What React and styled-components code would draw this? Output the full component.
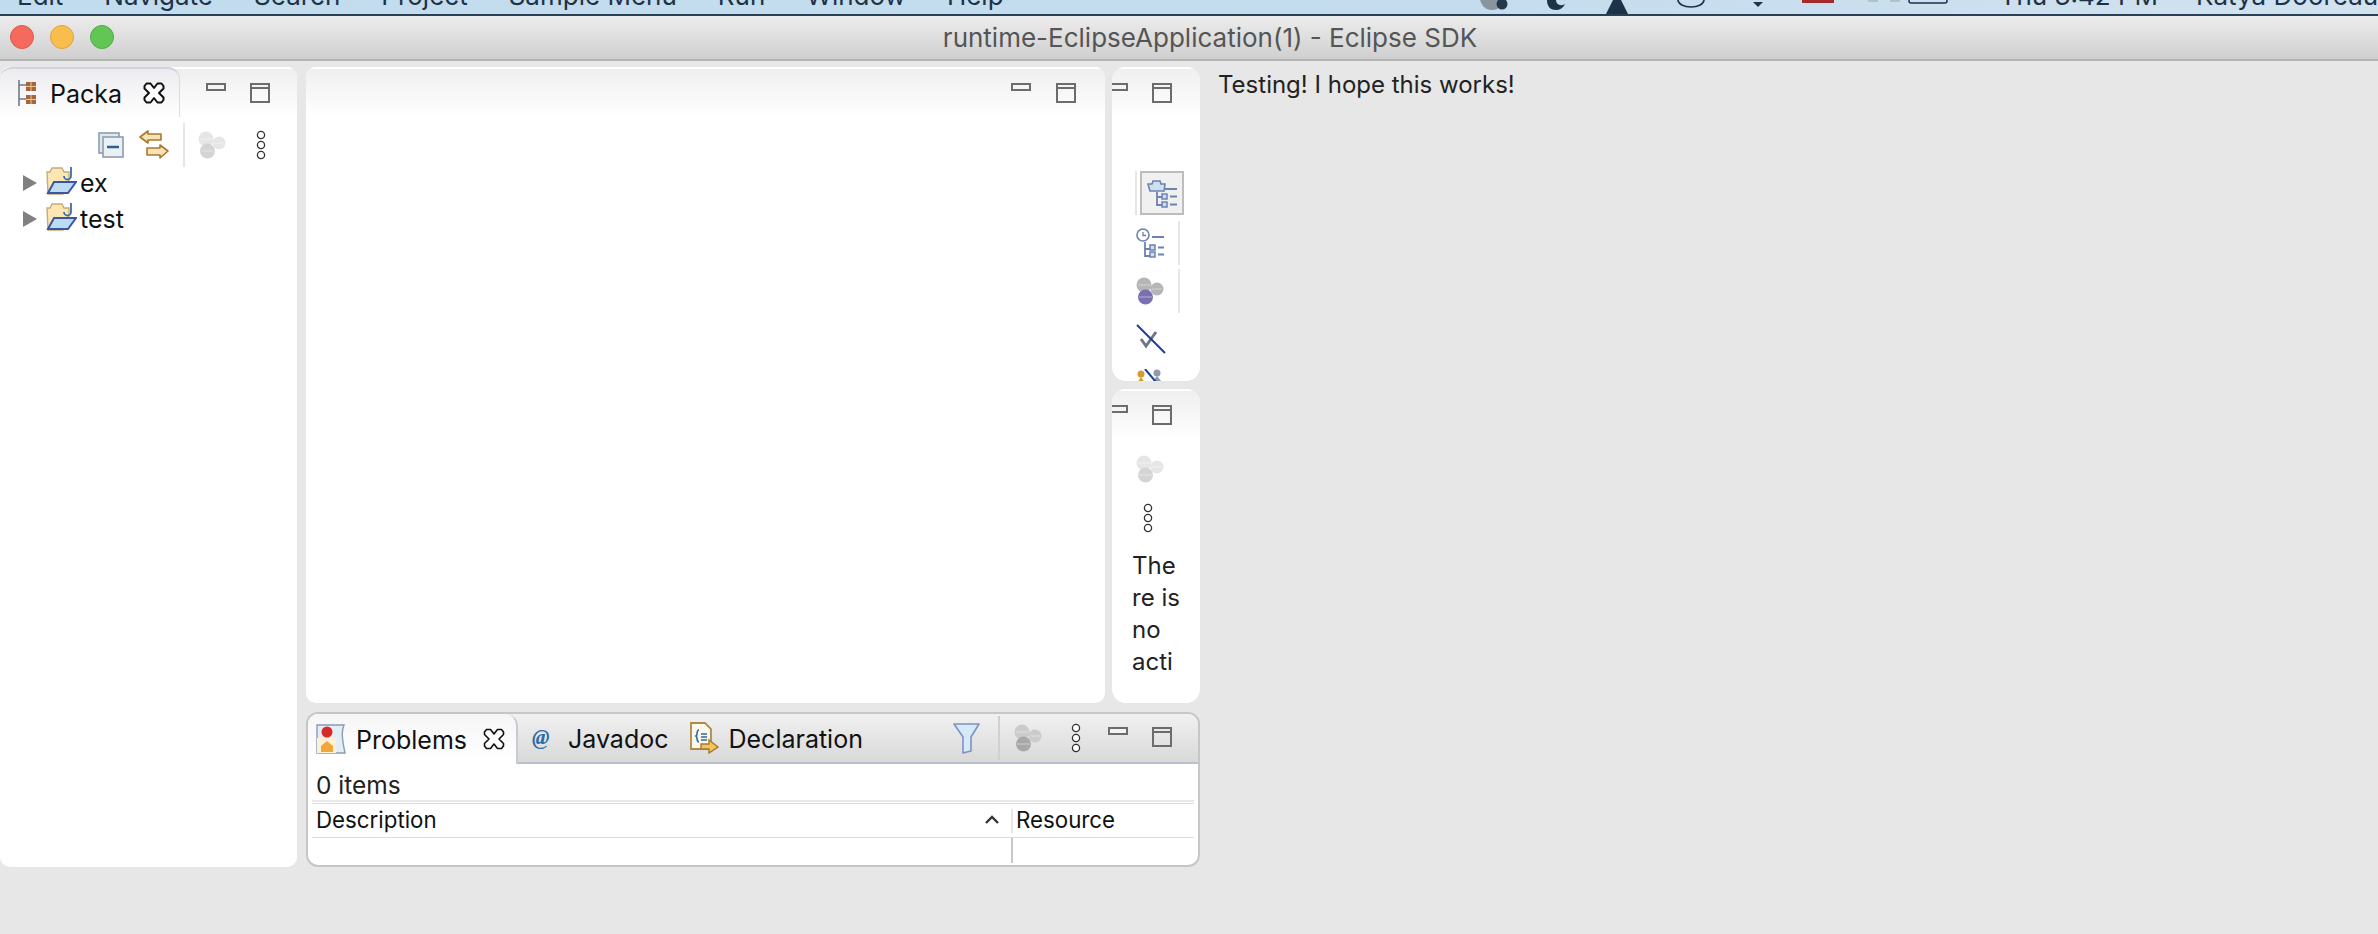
import React from 'react';
import styled, { createGlobalStyle } from 'styled-components';

const GlobalStyle = createGlobalStyle`
  html, body {
    margin: 0;
    padding: 0;
    height: 100%;
    background: #e7e7e7;
    overflow: hidden;
  }
  body {
    font-family: Inter, "Noto Sans", sans-serif;
    color: #111;
  }
`;

const Page = styled.div`
  width: 2378px;
  height: 934px;
  display: flex;
  flex-direction: column;
  overflow: hidden;
`;

const MenuBar = styled.div`
  height: 14px;
  flex: none;
  overflow: hidden;
  background: linear-gradient(90deg, #c2dcef 0%, #c4dcee 60%, #d2e2ef 100%);
  border-bottom: 2px solid #2a4056;
`;

const MenuRow = styled.div`
  display: flex;
  align-items: flex-start;
  height: 26px;
  margin-top: -17px;
  padding-left: 17px;
  font-size: 26px;
  line-height: 26px;
  color: #1d3246;
  white-space: nowrap;
`;

const MenuItem = styled.span`
  margin-right: 41px;
`;

const StatusIcons = styled.div`
  display: flex;
  align-items: flex-start;
  height: 14px;
  margin-top: 17px;
  margin-left: 433px;
`;

const StatusIcon = styled.svg`
  flex: none;
  margin-left: ${({ $gap }) => $gap || 0}px;
`;

const Clock = styled.span`
  margin-left: 52px;
  margin-top: -17px;
`;

const UserName = styled.span`
  margin-left: 38px;
  margin-top: -17px;
`;

const TitleBar = styled.div`
  height: 43px;
  flex: none;
  display: flex;
  align-items: center;
  background: linear-gradient(180deg, #ededed 0%, #cfcfcf 100%);
  border-bottom: 2px solid #b4b4b4;
`;

const Lights = styled.div`
  display: flex;
  gap: 16px;
  margin-left: 10px;
  margin-top: -2px;
`;

const Light = styled.span`
  width: 24px;
  height: 24px;
  border-radius: 50%;
  box-sizing: border-box;
  background: ${({ $color }) => $color};
  border: 1px solid ${({ $edge }) => $edge};
`;

const Title = styled.div`
  flex: 1;
  text-align: center;
  font-size: 26px;
  color: #555;
  margin-left: -72px;
`;

const Workspace = styled.div`
  flex: 1;
  display: flex;
  align-items: flex-start;
  padding-top: 6px;
`;

const SidePanel = styled.section`
  width: 297px;
  height: 800px;
  flex: none;
  background: #fff;
  border-radius: 10px;
  overflow: hidden;
`;

const Middle = styled.div`
  width: 894px;
  margin-left: 9px;
  flex: none;
  display: flex;
  flex-direction: column;
  gap: 9px;
`;

const TopRow = styled.div`
  display: flex;
  gap: 7px;
  height: 636px;
`;

const EditorPanel = styled.section`
  flex: 1;
  background: #fff;
  border-radius: 10px;
  overflow: hidden;
`;

const RightStack = styled.div`
  width: 88px;
  display: flex;
  flex-direction: column;
  gap: 8px;
`;

const NarrowPanel = styled.section`
  flex: 1;
  height: 314px;
  background: #fff;
  border-radius: 14px;
  overflow: hidden;
`;

const PanelHead = styled.div`
  height: 50px;
  box-sizing: border-box;
  display: flex;
  align-items: flex-start;
  justify-content: ${({ $end }) => ($end ? 'flex-end' : 'flex-start')};
  padding-right: ${({ $end }) => ($end ? '29px' : 0)};
  background: linear-gradient(180deg, #efefef 0%, #ffffff 100%);
  border-top: 2px solid #fff;
`;

const PackageTab = styled.div`
  width: 180px;
  height: 50px;
  margin-top: -2px;
  box-sizing: border-box;
  display: flex;
  align-items: center;
  padding-left: 18px;
  border-top: 2px solid #d2d3de;
  border-right: 1px solid #dcdce4;
  border-top-right-radius: 12px;
  border-top-left-radius: 12px;
  background: linear-gradient(180deg, #ececf0 0%, #ffffff 100%);
`;

const TabLabel = styled.span`
  margin-left: ${({ $gap }) => $gap}px;
  margin-right: ${({ $after }) => $after || 0}px;
  padding-top: 2px;
  font-size: 25px;
  color: #111;
`;

const WindowButtons = styled.div`
  display: flex;
  gap: ${({ $gap }) => $gap}px;
  margin-top: ${({ $top }) => $top}px;
  margin-left: ${({ $left }) => $left || 0}px;
`;

const HeadWindowButtons = styled(WindowButtons)`
  align-self: flex-start;
`;

const ViewToolbar = styled.div`
  display: flex;
  align-items: center;
  height: 44px;
  margin-top: 6px;
`;

const ToolIcon = styled.svg`
  flex: none;
  display: block;
  margin-left: ${({ $left }) => $left || 0}px;
`;

const FolderIcon = styled(ToolIcon)`
  margin-top: -5px;
`;

const ToolSep = styled.span`
  width: 2px;
  height: 44px;
  background: #e6e6e6;
  margin-left: ${({ $left }) => $left}px;
  flex: none;
`;

const Tree = styled.div`
  display: flex;
  flex-direction: column;
`;

const TreeRow = styled.div`
  height: 36px;
  display: flex;
  align-items: center;
  font-size: 25px;
  padding-left: 23px;
  margin-top: ${({ $first }) => ($first ? '-2px' : '0')};
`;

const Arrow = styled.span`
  width: 0;
  height: 0;
  border-left: 14px solid #808080;
  border-top: 8px solid transparent;
  border-bottom: 8px solid transparent;
`;

const TreeLabel = styled.span`
  margin-left: 3px;
  line-height: 36px;
`;

const OutlineTools = styled.div`
  height: 262px;
  overflow: hidden;
  display: flex;
  flex-direction: column;
  margin-top: 52px;
`;

const OutlineRow = styled.div`
  display: flex;
  align-items: center;
  flex: none;
  height: 48px;
  margin-bottom: ${({ $after }) => $after || 0}px;
`;

const ClippedRow = styled.div`
  display: flex;
  flex: none;
  align-items: flex-start;
  padding-top: 6px;
`;

const SelectedTool = styled.span`
  width: 44px;
  height: 44px;
  box-sizing: border-box;
  margin-left: 3px;
  border: 2px solid #bdbdbd;
  background: #f0f0f0;
  display: flex;
  align-items: center;
  justify-content: center;
`;

const LeadingSep = styled.span`
  width: 2px;
  height: 44px;
  background: #e6e6e6;
  margin-left: 23px;
  flex: none;
`;

const TaskColumn = styled.div`
  display: flex;
  flex-direction: column;
  gap: 20px;
  padding-left: 20px;
  margin-top: 16px;
`;

const NoActive = styled.div`
  font-size: 24px;
  line-height: 32px;
  color: #222;
  margin-top: -3px;
`;

const ProblemsPanel = styled.section`
  height: 155px;
  box-sizing: border-box;
  border: 2px solid #c6c6c6;
  border-radius: 12px;
  background: #fff;
  overflow: hidden;
`;

const ProblemsHead = styled.div`
  height: 50px;
  box-sizing: border-box;
  display: flex;
  align-items: stretch;
  background: linear-gradient(180deg, #f1f1f1 0%, #d9d9d9 100%);
  border-bottom: 2px solid #b9c1d1;
`;

const ActiveTab = styled.div`
  width: 210px;
  height: 50px;
  box-sizing: border-box;
  display: flex;
  align-items: center;
  padding-left: 8px;
  background: linear-gradient(180deg, #f6f6f6 0%, #ffffff 100%);
  border-right: 2px solid #c6cbd6;
  border-top-right-radius: 12px;
`;

const InactiveTab = styled.div`
  display: flex;
  align-items: center;
  margin-left: ${({ $left }) => $left}px;
`;

const HeadTools = styled.div`
  display: flex;
  align-items: center;
  margin-left: 90px;
`;

const HeadSep = styled.span`
  width: 2px;
  height: 44px;
  background: #d0d0d0;
  margin-left: 18px;
`;

const ItemsCount = styled.div`
  height: 36px;
  box-sizing: border-box;
  display: flex;
  align-items: center;
  padding-left: 8px;
  padding-top: 6px;
  font-size: 24.5px;
  color: #222;
`;

const TableBox = styled.div`
  margin: 0 4px;
  border-top: 2px solid #e9e9e9;
`;

const HeaderRow = styled.div`
  display: flex;
  height: 33px;
  box-sizing: content-box;
  margin-top: 1px;
  border-top: 1px solid #dcdcdc;
  border-bottom: 1px solid #dcdcdc;
  font-size: 22.3px;
  align-items: center;
`;

const ColumnHead = styled.div`
  width: ${({ $w }) => $w}px;
  box-sizing: border-box;
  flex: none;
  display: flex;
  align-items: center;
  justify-content: space-between;
  padding-left: 4px;
  padding-right: 12px;
  padding-bottom: 3px;
  color: #111;
`;

const ColumnSep = styled.span`
  width: 2px;
  height: ${({ $h }) => $h}px;
  flex: none;
  background: ${({ $dark }) => ($dark ? '#c8c8c8' : '#e6e6e6')};
`;

const TableRow = styled.div`
  display: flex;
  height: 25px;
`;

const TableCell = styled.div`
  width: 699px;
  flex: none;
`;

const ResourceHead = styled.span`
  padding-left: 3px;
  padding-bottom: 3px;
`;

const RightContent = styled.div`
  margin-left: 18px;
  margin-top: 3px;
  font-size: 24px;
  line-height: 30px;
  color: #222;
`;

const MinButton = ({ left = 0 }) => (
  <ToolIcon $left={left} width="20" height="8" viewBox="0 0 20 8">
    <rect x="1" y="1" width="18" height="6" fill="#f4f4f4" stroke="#6c6c6c" strokeWidth="2" />
  </ToolIcon>
);

const MaxButton = () => (
  <ToolIcon width="20" height="20" viewBox="0 0 20 20">
    <rect x="1" y="1" width="18" height="18" fill="none" stroke="#6c6c6c" strokeWidth="2" />
    <path d="M1 5h18" stroke="#6c6c6c" strokeWidth="2" />
  </ToolIcon>
);

const CloseIcon = ({ stroke = 2 }) => (
  <ToolIcon width="22" height="22" viewBox="0 0 22 22">
    <path
      d="M3.5 1.5 L7.5 1.5 L11 6 L14.5 1.5 L18.5 1.5 L20.5 4 L20.5 6.5 L16 11 L20.5 15.5 L20.5 18 L18.5 20.5 L14.5 20.5 L11 16 L7.5 20.5 L3.5 20.5 L1.5 18 L1.5 15.5 L6 11 L1.5 6.5 L1.5 4Z"
      fill="#fff"
      stroke="#111"
      strokeWidth={stroke}
      strokeLinejoin="round"
    />
  </ToolIcon>
);

const DotsIcon = ({ left = 0 }) => (
  <ToolIcon $left={left} width="12" height="30" viewBox="0 0 12 30">
    <circle cx="6" cy="5" r="3.6" fill="#fff" stroke="#333" strokeWidth="1.3" />
    <circle cx="6" cy="15" r="3.6" fill="#fff" stroke="#333" strokeWidth="1.3" />
    <circle cx="6" cy="25" r="3.6" fill="#fff" stroke="#333" strokeWidth="1.3" />
  </ToolIcon>
);

// the three database balls: plain grey when disabled, purple front ball when active
const SyncIcon = ({ left = 0, active = false, onGrey = false }) => {
  let top = '#e6e6e6';
  let bottom = '#d4d4d4';
  if (active) {
    top = '#b5b5b5';
    bottom = '#7a6fb0';
  } else if (onGrey) {
    top = '#cbcbcb';
    bottom = '#a8a8a8';
  }
  return (
    <ToolIcon $left={left} width="28" height="28" viewBox="0 0 28 28">
      <circle cx="8" cy="8" r="7.5" fill={top} />
      <circle cx="21" cy="12" r="6.5" fill={top} />
      <circle cx="9.5" cy="20" r="7.5" fill={bottom} />
      <path d="M3 20h13M2 8h12M16 12h10" stroke="#fff" strokeWidth="1" opacity="0.45" />
    </ToolIcon>
  );
};

const PackageIcon = () => (
  <ToolIcon width="19" height="26" viewBox="0 0 19 26">
    <path d="M1 0v26M1 5h7M1 19h7" stroke="#6f7a8c" strokeWidth="1.6" fill="none" />
    <rect x="8" y="2" width="10" height="9" fill="#a5663a" />
    <rect x="8" y="15" width="10" height="9" fill="#a5663a" />
    <path d="M13 2v9M8 6.5h10M13 15v9M8 19.5h10" stroke="#e7c9a0" strokeWidth="1" />
  </ToolIcon>
);

const CollapseIcon = () => (
  <ToolIcon $left={98} width="26" height="26" viewBox="0 0 26 26">
    <rect x="1" y="1" width="20" height="20" fill="#dfe8ef" stroke="#8f9db0" strokeWidth="1.6" />
    <rect x="5" y="5" width="20" height="20" fill="#eaf0f4" stroke="#8f9db0" strokeWidth="1.6" />
    <path d="M9 15h12" stroke="#2e6294" strokeWidth="2.4" />
  </ToolIcon>
);

const LinkIcon = () => (
  <ToolIcon $left={15} width="30" height="30" viewBox="0 0 30 30">
    <path d="M1 7 L9 1 V4 H22 V10 H9 V13Z" fill="#f5e3b5" stroke="#a9792c" strokeWidth="1.6" strokeLinejoin="round" />
    <path d="M29 21 L21 15 V18 H8 V25 H21 V28Z" fill="#f5e3b5" stroke="#a9792c" strokeWidth="1.6" strokeLinejoin="round" />
  </ToolIcon>
);

const ProjectFolder = () => (
  <FolderIcon $left={8} width="32" height="29" viewBox="0 0 32 29">
    <path d="M2 6h3l2-4h10l2 4h5v10L18 28H3Z" fill="#fbe6b4" stroke="#c9ab74" strokeWidth="1.4" />
    <path d="M3 27 L9 16 H31 L23 27Z" fill="#bcdcf6" stroke="#3a55a6" strokeWidth="2" />
    <path d="M26 1v9a3.5 3.5 0 0 1-7 0" fill="none" stroke="#3c6ea8" strokeWidth="1.8" />
  </FolderIcon>
);

const OutlineFolderIcon = () => (
  <ToolIcon width="31" height="30" viewBox="0 0 31 30">
    <path d="M1 6h4l1-3h7l1 3h4l-1 7H3Z" fill="#cfdff0" stroke="#6c82b0" strokeWidth="1.6" />
    <path d="M18 11h12M10 14v13h5M10 19h5" stroke="#6c82b0" strokeWidth="1.8" fill="none" />
    <rect x="15" y="16" width="5" height="5" fill="#cfdff0" stroke="#6c82b0" strokeWidth="1.5" />
    <rect x="15" y="24" width="5" height="5" fill="#cfdff0" stroke="#6c82b0" strokeWidth="1.5" />
    <path d="M23 18.5h7M23 26.5h7" stroke="#6c82b0" strokeWidth="1.8" />
  </ToolIcon>
);

const HistoryIcon = () => (
  <ToolIcon $left={24} width="30" height="30" viewBox="0 0 30 30">
    <circle cx="7" cy="7" r="6" fill="#fff" stroke="#6c82b0" strokeWidth="1.6" />
    <path d="M7 4v3.5h3" stroke="#6c82b0" strokeWidth="1.3" fill="none" />
    <path d="M16 9h12M9 14v14h6M9 21h6" stroke="#6c82b0" strokeWidth="1.8" fill="none" />
    <rect x="14" y="17" width="5" height="5" fill="#cfdff0" stroke="#6c82b0" strokeWidth="1.5" />
    <rect x="14" y="24" width="5" height="5" fill="#cfdff0" stroke="#6c82b0" strokeWidth="1.5" />
    <path d="M22 19.5h6M22 26.5h6" stroke="#6c82b0" strokeWidth="1.8" />
  </ToolIcon>
);

const TaskIcon = () => (
  <ToolIcon $left={24} width="30" height="30" viewBox="0 0 30 30">
    <path d="M5 15 L10 22 L20 8" fill="none" stroke="#6d7788" strokeWidth="3" />
    <path d="M1 1 L29 29" stroke="#1c3f94" strokeWidth="2" />
  </ToolIcon>
);

const PersonIcon = () => (
  <ToolIcon $left={24} width="30" height="14" viewBox="0 0 30 14">
    <circle cx="5" cy="5" r="3.5" fill="#d69b2e" />
    <path d="M1 14 L5 8 L9 14Z" fill="#d69b2e" />
    <circle cx="21" cy="4" r="3.5" fill="#8c9bb0" />
    <path d="M16 13 L21 7 L26 13Z" fill="#8c9bb0" />
    <path d="M9 0 L20 13" stroke="#1c3f94" strokeWidth="2" />
  </ToolIcon>
);

const ProblemsIcon = () => (
  <ToolIcon width="30" height="30" viewBox="0 0 30 30">
    <path d="M1 1h27c-2 5-3 9 1 28H1Z" fill="#e3edf5" stroke="#8b9bb3" strokeWidth="1.4" />
    <path d="M1 14h19v15H1Z" fill="#fdf0d5" />
    <circle cx="11" cy="8" r="5.5" fill="#d8292a" />
    <path d="M5 28v-6l6-5 6 5v6Z" fill="#f0a63a" />
  </ToolIcon>
);

const AtIcon = () => (
  <ToolIcon width="22" height="22" viewBox="0 0 22 22">
    <text x="1" y="17" fontFamily="'Liberation Serif', serif" fontStyle="italic" fontWeight="700" fontSize="21" fill="#2a6ba8">@</text>
  </ToolIcon>
);

const DeclarationIcon = () => (
  <ToolIcon width="29" height="32" viewBox="0 0 29 32">
    <path d="M1 1h14l6 6v20H1Z" fill="#fdf8ec" stroke="#b08a4a" strokeWidth="1.8" />
    <path d="M9 8c-3 0-1 5-3 6 2 1 0 6 3 6" fill="none" stroke="#2e6ba5" strokeWidth="1.6" />
    <path d="M11 12h6M11 15h6M11 18h6" stroke="#2e6ba5" strokeWidth="1.4" />
    <path d="M11 22h8v-4l9 7-9 6v-4h-8Z" fill="#f1c65e" stroke="#a9792c" strokeWidth="1.4" />
  </ToolIcon>
);

const FilterIcon = () => (
  <ToolIcon width="27" height="31" viewBox="0 0 27 31">
    <path d="M1 1h25l-8 13v14l-8 2V14Z" fill="#d5e9f9" stroke="#7d93bd" strokeWidth="1.6" strokeLinejoin="round" />
  </ToolIcon>
);

const Caret = () => (
  <ToolIcon width="14" height="9" viewBox="0 0 14 9">
    <path d="M1 8 L7 2 L13 8" fill="none" stroke="#333" strokeWidth="2.4" />
  </ToolIcon>
);

const App = () => (
  <Page>
    <GlobalStyle />
    <MenuBar>
      <MenuRow>
        <MenuItem>Edit</MenuItem>
        <MenuItem>Navigate</MenuItem>
        <MenuItem>Search</MenuItem>
        <MenuItem>Project</MenuItem>
        <MenuItem>Sample Menu</MenuItem>
        <MenuItem>Run</MenuItem>
        <MenuItem>Window</MenuItem>
        <MenuItem>Help</MenuItem>
        <StatusIcons>
          <StatusIcon width="34" height="14" viewBox="0 0 34 14">
            <circle cx="14" cy="-2" r="12" fill="#8a949c" />
            <circle cx="24" cy="4" r="5.5" fill="#26394c" />
          </StatusIcon>
          <StatusIcon $gap={33} width="22" height="14" viewBox="0 0 22 14">
            <path d="M2 0c0 7 4 10 9 10 4 0 7-2 9-6-5 3-9 0-9-4Z" fill="#1d3246" />
          </StatusIcon>
          <StatusIcon $gap={38} width="24" height="14" viewBox="0 0 24 14">
            <path d="M8 0h8l7 14H1Z" fill="#1d3246" />
          </StatusIcon>
          <StatusIcon $gap={48} width="28" height="14" viewBox="0 0 28 14">
            <path d="M1 0a13 7 0 0 0 26 0" fill="none" stroke="#1d3246" strokeWidth="1.6" />
          </StatusIcon>
          <StatusIcon $gap={47} width="12" height="14" viewBox="0 0 12 14">
            <path d="M1 2h10L6 7Z" fill="#1d3246" />
          </StatusIcon>
          <StatusIcon $gap={38} width="32" height="14" viewBox="0 0 32 14">
            <path d="M0 0h32v3H0Z" fill="#a52a2a" />
          </StatusIcon>
          <StatusIcon $gap={32} width="36" height="14" viewBox="0 0 36 14">
            <path d="M2 1h10M24 1h10" stroke="#a8b8c6" strokeWidth="1.5" />
          </StatusIcon>
          <StatusIcon $gap={6} width="40" height="14" viewBox="0 0 40 14">
            <path d="M1 0v1a2 2 0 0 0 2 2h34a2 2 0 0 0 2-2V0" fill="none" stroke="#1d3246" strokeWidth="1.5" />
          </StatusIcon>
          <Clock>Thu 3:42 PM</Clock>
          <UserName>Katya Dooreau</UserName>
        </StatusIcons>
      </MenuRow>
    </MenuBar>

    <TitleBar>
      <Lights>
        <Light $color="#f46b5d" $edge="#dc5a4e" />
        <Light $color="#f9bd4e" $edge="#dfa23c" />
        <Light $color="#62c655" $edge="#50ab45" />
      </Lights>
      <Title>runtime-EclipseApplication(1) - Eclipse SDK</Title>
    </TitleBar>

    <Workspace>
      <SidePanel>
        <PanelHead>
          <PackageTab>
            <PackageIcon />
            <TabLabel $gap={13} $after={21}>Packa</TabLabel>
            <CloseIcon />
          </PackageTab>
          <WindowButtons $gap={24} $top={14} $left={26}>
            <MinButton />
            <MaxButton />
          </WindowButtons>
        </PanelHead>
        <ViewToolbar>
          <CollapseIcon />
          <LinkIcon />
          <ToolSep $left={14} />
          <SyncIcon left={13} />
          <DotsIcon left={29} />
        </ViewToolbar>
        <Tree>
          <TreeRow $first>
            <Arrow />
            <ProjectFolder />
            <TreeLabel>ex</TreeLabel>
          </TreeRow>
          <TreeRow>
            <Arrow />
            <ProjectFolder />
            <TreeLabel>test</TreeLabel>
          </TreeRow>
        </Tree>
      </SidePanel>

      <Middle>
        <TopRow>
          <EditorPanel>
            <PanelHead $end>
              <WindowButtons $gap={25} $top={14}>
                <MinButton />
                <MaxButton />
              </WindowButtons>
            </PanelHead>
          </EditorPanel>
          <RightStack>
            <NarrowPanel>
              <PanelHead>
                <WindowButtons $gap={24} $top={14} $left={-4}>
                  <MinButton />
                  <MaxButton />
                </WindowButtons>
              </PanelHead>
              <OutlineTools>
                <OutlineRow $after={2}>
                  <LeadingSep />
                  <SelectedTool>
                    <OutlineFolderIcon />
                  </SelectedTool>
                </OutlineRow>
                <OutlineRow>
                  <HistoryIcon />
                  <ToolSep $left={12} />
                </OutlineRow>
                <OutlineRow>
                  <SyncIcon left={24} active />
                  <ToolSep $left={14} />
                </OutlineRow>
                <OutlineRow>
                  <TaskIcon />
                </OutlineRow>
                <ClippedRow>
                  <PersonIcon />
                </ClippedRow>
              </OutlineTools>
            </NarrowPanel>
            <NarrowPanel>
              <PanelHead>
                <WindowButtons $gap={24} $top={14} $left={-4}>
                  <MinButton />
                  <MaxButton />
                </WindowButtons>
              </PanelHead>
              <TaskColumn>
                <SyncIcon left={4} />
                <DotsIcon left={10} />
                <NoActive>
                  The
                  <br />
                  re is
                  <br />
                  no
                  <br />
                  acti
                </NoActive>
              </TaskColumn>
            </NarrowPanel>
          </RightStack>
        </TopRow>

        <ProblemsPanel>
          <ProblemsHead>
            <ActiveTab>
              <ProblemsIcon />
              <TabLabel $gap={10} $after={16}>Problems</TabLabel>
              <CloseIcon stroke={1.6} />
            </ActiveTab>
            <InactiveTab $left={13}>
              <AtIcon />
              <TabLabel $gap={15}>Javadoc</TabLabel>
            </InactiveTab>
            <InactiveTab $left={21}>
              <DeclarationIcon />
              <TabLabel $gap={10}>Declaration</TabLabel>
            </InactiveTab>
            <HeadTools>
              <FilterIcon />
              <HeadSep />
              <SyncIcon left={14} onGrey />
              <DotsIcon left={28} />
              <HeadWindowButtons $gap={24} $top={13} $left={26}>
                <MinButton />
                <MaxButton />
              </HeadWindowButtons>
            </HeadTools>
          </ProblemsHead>
          <ItemsCount>0 items</ItemsCount>
          <TableBox>
            <HeaderRow>
              <ColumnHead $w={699}>
                <span>Description</span>
                <Caret />
              </ColumnHead>
              <ColumnSep $h={24} />
              <ResourceHead>Resource</ResourceHead>
            </HeaderRow>
            <TableRow>
              <TableCell />
              <ColumnSep $h={25} $dark />
            </TableRow>
          </TableBox>
        </ProblemsPanel>
      </Middle>

      <RightContent>Testing! I hope this works!</RightContent>
    </Workspace>
  </Page>
);

export default App;
